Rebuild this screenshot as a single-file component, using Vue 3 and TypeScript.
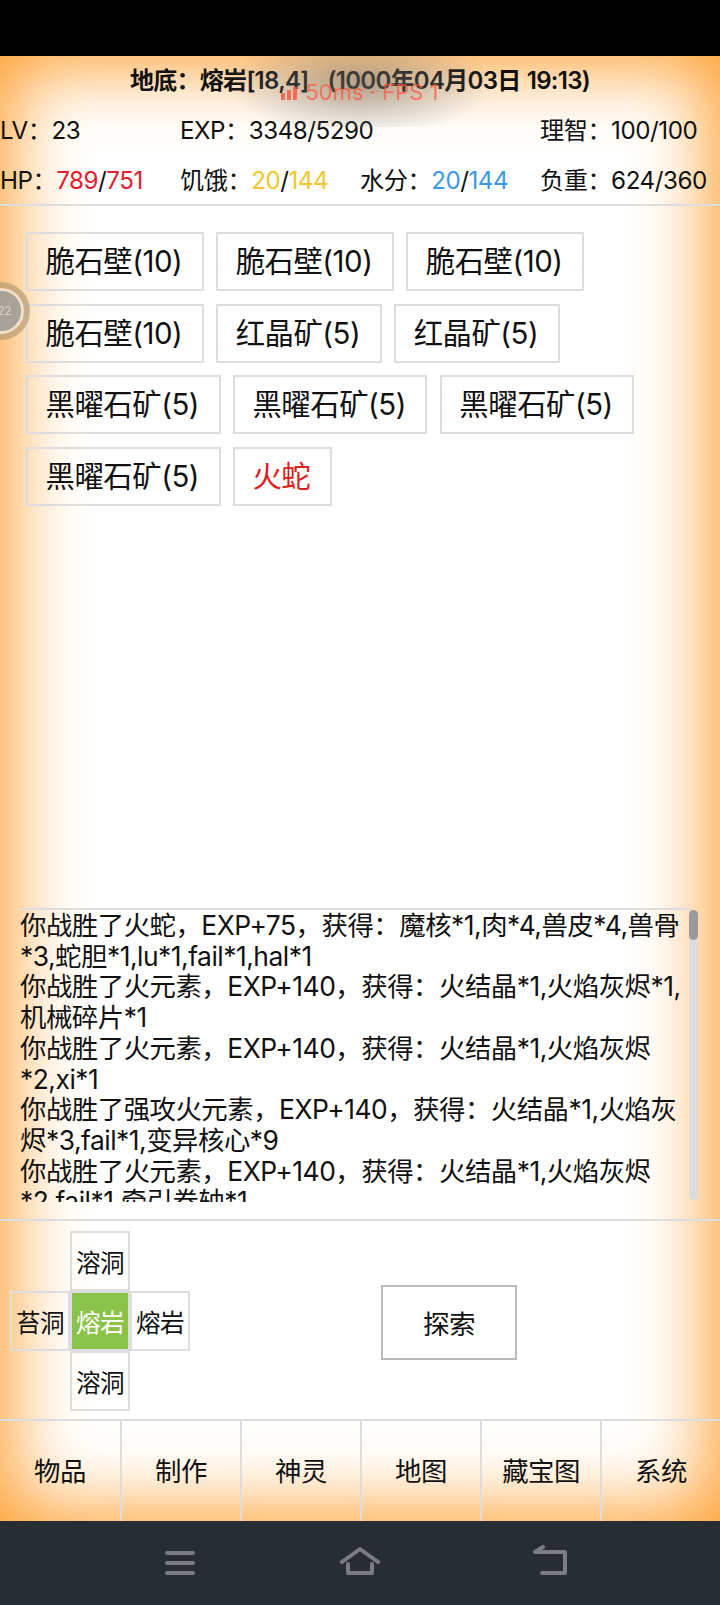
<script setup lang="ts">
const tags: { name: string; enemy?: boolean }[] = [
  { name: '脆石壁(10)' },
  { name: '脆石壁(10)' },
  { name: '脆石壁(10)' },
  { name: '脆石壁(10)' },
  { name: '红晶矿(5)' },
  { name: '红晶矿(5)' },
  { name: '黑曜石矿(5)' },
  { name: '黑曜石矿(5)' },
  { name: '黑曜石矿(5)' },
  { name: '黑曜石矿(5)' },
  { name: '火蛇', enemy: true }
]

const logs: string[] = [
  '你战胜了火蛇，EXP+75，获得：魔核*1,肉*4,兽皮*4,兽骨*3,蛇胆*1,lu*1,fail*1,hal*1',
  '你战胜了火元素，EXP+140，获得：火结晶*1,火焰灰烬*1,机械碎片*1',
  '你战胜了火元素，EXP+140，获得：火结晶*1,火焰灰烬*2,xi*1',
  '你战胜了强攻火元素，EXP+140，获得：火结晶*1,火焰灰烬*3,fail*1,变异核心*9',
  '你战胜了火元素，EXP+140，获得：火结晶*1,火焰灰烬*2,fail*1,牵引卷轴*1'
]

const tabs: string[] = ['物品', '制作', '神灵', '地图', '藏宝图', '系统']
</script>

<template>
  <div class="screen">
    <div class="status-bar" />
    <div class="page">
      <div class="net-badge">
        <svg class="signal" width="16" height="13" viewBox="0 0 16 13">
          <rect x="0" y="6" width="4" height="7" />
          <rect x="6" y="3" width="4" height="10" />
          <rect x="12" y="0" width="4" height="13" />
        </svg>
        <span>50ms · FPS 1</span>
      </div>
      <div class="float-ball">
        <div class="float-inner">22</div>
      </div>

      <header class="head">
        <div class="title">地底：熔岩[18,4]&nbsp;&nbsp;&nbsp;(1000年04月03日 19:13)</div>
        <div class="stats">
          <div>LV：23</div>
          <div>EXP：3348/5290</div>
          <div />
          <div>理智：100/100</div>
          <div>HP：<span class="red">789</span>/<span class="red">751</span></div>
          <div>饥饿：<span class="yellow">20</span>/<span class="yellow">144</span></div>
          <div>水分：<span class="blue">20</span>/<span class="blue">144</span></div>
          <div>负重：624/360</div>
        </div>
      </header>

      <section class="scene">
        <div
          v-for="(tag, i) in tags"
          :key="i"
          class="tag"
          :class="{ enemy: tag.enemy }"
        >
          {{ tag.name }}
        </div>
      </section>

      <section class="log-wrap">
        <div class="log">
          <div v-for="(line, i) in logs" :key="i">{{ line }}</div>
        </div>
        <div class="scroll-track"><div class="scroll-thumb" /></div>
      </section>

      <section class="controls">
        <div class="dpad">
          <div class="cell top">溶洞</div>
          <div class="cell left">苔洞</div>
          <div class="cell mid">熔岩</div>
          <div class="cell right">熔岩</div>
          <div class="cell bottom">溶洞</div>
        </div>
        <button class="explore" type="button">探索</button>
      </section>

      <nav class="tabs">
        <div v-for="tab in tabs" :key="tab" class="tab">{{ tab }}</div>
      </nav>
    </div>

    <div class="nav-bar">
      <svg class="nav-menu" width="32" height="32" viewBox="0 0 32 32">
        <path d="M3 8h26M3 18h26M3 28h26" />
      </svg>
      <svg class="nav-home" width="40" height="32" viewBox="0 0 40 32">
        <path d="M2 17 20 4l18 13M8 19v9h24v-9" />
      </svg>
      <svg class="nav-back" width="36" height="32" viewBox="0 0 36 32">
        <path d="M3 7h30v21H10M3 7l8-5" />
      </svg>
    </div>
  </div>
</template>

<style>
html,
body {
  margin: 0;
  background: #000;
}
</style>

<style scoped>
.screen {
  width: 720px;
  height: 1605px;
  display: flex;
  flex-direction: column;
  overflow: hidden;
  font-family: Inter, 'Noto Sans CJK SC', sans-serif;
  letter-spacing: -0.03em;
  color: #111;
}
.status-bar {
  height: 56px;
  background: #000;
}
.page {
  position: relative;
  height: 1465px;
  display: flex;
  flex-direction: column;
  background: #fff;
  box-shadow: inset 0 0 72px 12px #ff9f30;
}
.net-badge {
  position: absolute;
  left: 225px;
  top: 0;
  width: 270px;
  height: 71px;
  padding-top: 23px;
  box-sizing: border-box;
  display: flex;
  justify-content: center;
  align-items: flex-start;
  gap: 8px;
  font-size: 22px;
  letter-spacing: 0;
  line-height: 26px;
  color: rgba(255, 84, 62, 0.72);
  background: radial-gradient(ellipse 50% 75% at 50% 40%, rgba(115, 105, 95, 0.55), rgba(130, 130, 130, 0.22) 65%, rgba(160, 160, 160, 0) 100%);
}
.signal {
  margin-top: 8px;
  fill: rgba(255, 84, 62, 0.8);
}
.float-ball {
  position: absolute;
  left: -28px;
  top: 226px;
  width: 58px;
  height: 58px;
  border-radius: 50%;
  background: rgba(176, 150, 112, 0.65);
  display: flex;
  align-items: center;
  justify-content: center;
}
.float-inner {
  width: 30px;
  height: 40px;
  padding-right: 10px;
  border-radius: 50%;
  background: #a8a298;
  border: 3px solid #f0dfc6;
  color: #d8d4cc;
  font-size: 12px;
  line-height: 40px;
  text-align: right;
}
.head {
  height: 150px;
  flex-shrink: 0;
  box-sizing: border-box;
  border-bottom: 2px solid #ddd;
  padding-top: 9px;
}
.title {
  font-size: 24px;
  line-height: 32px;
  font-weight: 600;
  letter-spacing: -0.03em;
  word-spacing: 1px;
  text-align: center;
}
.stats {
  margin-top: 9px;
  display: grid;
  grid-template-columns: repeat(4, 180px);
  grid-auto-rows: 50px;
  font-size: 24.2px;
  line-height: 50px;
  white-space: nowrap;
}
.red {
  color: #e0202c;
}
.yellow {
  color: #f0c62c;
}
.blue {
  color: #3a98e6;
}
.scene {
  height: 702px;
  flex-shrink: 0;
  box-sizing: border-box;
  padding: 26px 60px 0 26px;
  display: flex;
  flex-wrap: wrap;
  align-content: flex-start;
  gap: 12.6px 12.4px;
}
.tag {
  height: 59px;
  box-sizing: border-box;
  border: 2px solid #ddd;
  padding: 0 19.5px 0 17.5px;
  font-size: 29.4px;
  line-height: 55px;
}
.tag.enemy {
  color: #e01b1b;
}
.log-wrap {
  position: relative;
  height: 313px;
  flex-shrink: 0;
  box-sizing: border-box;
  padding: 0 28px 0 20px;
  border-bottom: 2px solid #ddd;
}
.log {
  height: 292px;
  overflow: hidden;
  border-top: 2px solid #ddd;
  font-size: 26.4px;
  line-height: 30.7px;
}
.scroll-track {
  position: absolute;
  left: 689px;
  top: 2px;
  width: 9px;
  height: 290px;
  border-radius: 5px;
  background: #dcdcdc;
}
.scroll-thumb {
  height: 30px;
  border-radius: 5px;
  background: #9a9a9a;
}
.controls {
  height: 200px;
  flex-shrink: 0;
  box-sizing: border-box;
  border-bottom: 2px solid #ddd;
  padding: 10px 0 0 10px;
  display: flex;
  align-items: flex-start;
}
.dpad {
  display: grid;
  grid-template-columns: repeat(3, 60px);
  grid-template-rows: repeat(3, 60px);
  font-size: 24.6px;
}
.cell {
  box-sizing: border-box;
  border: 2px solid #ddd;
  display: flex;
  align-items: center;
  justify-content: center;
}
.cell.top {
  grid-area: 1 / 2;
}
.cell.left {
  grid-area: 2 / 1;
}
.cell.mid {
  grid-area: 2 / 2;
  background: #8bc34a;
  color: #fff;
}
.cell.right {
  grid-area: 2 / 3;
}
.cell.bottom {
  grid-area: 3 / 2;
}
.explore {
  margin: 54px 0 0 191px;
  width: 136px;
  height: 75px;
  box-sizing: border-box;
  border: 2px solid #bbb;
  background: #fff;
  color: #111;
  font-family: inherit;
  letter-spacing: inherit;
  font-size: 26.6px;
  padding: 0;
}
.tabs {
  flex: 1;
  display: flex;
}
.tab {
  width: 120px;
  flex-shrink: 0;
  box-sizing: border-box;
  border-left: 2px solid #ddd;
  display: flex;
  align-items: center;
  justify-content: center;
  font-size: 26.4px;
  padding-bottom: 4px;
}
.tab:first-child {
  border-left: 0;
}
.nav-bar {
  flex: 1;
  background: #282c33;
  display: flex;
  align-items: flex-start;
  padding: 24px 0 0 164px;
}
.nav-bar svg {
  fill: none;
  stroke: #7a7d82;
  stroke-width: 4;
  stroke-linecap: round;
  stroke-linejoin: round;
}
.nav-home {
  margin-left: 144px;
}
.nav-back {
  margin-left: 152px;
}
</style>
